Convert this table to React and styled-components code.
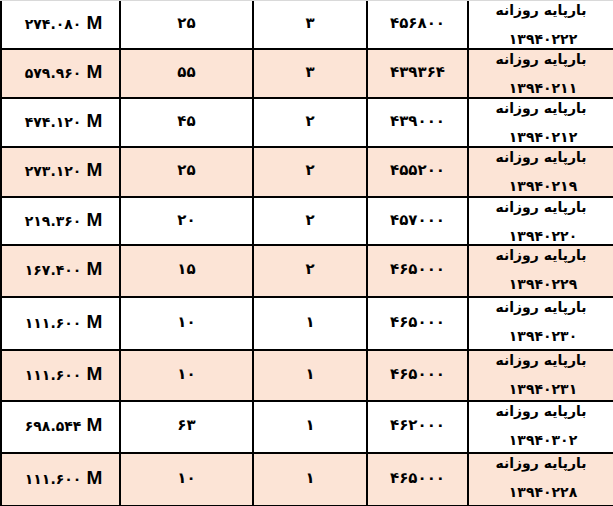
import React from 'react';
import styled, { createGlobalStyle } from 'styled-components';

const GlobalStyle = createGlobalStyle`
  html, body {
    margin: 0;
    padding: 0;
    background: #ffffff;
  }
  body {
    font-family: "DejaVu Sans", "Liberation Sans", sans-serif;
    color: #000;
  }
`;

const rows = [
  { total: '۲۷۴.۰۸۰', count: '۲۵', qty: '۳', price: '۴۵۶۸۰۰', code: '۱۳۹۴۰۲۲۲', h: 49 },
  { total: '۵۷۹.۹۶۰', count: '۵۵', qty: '۳', price: '۴۳۹۳۶۴', code: '۱۳۹۴۰۲۱۱', h: 49 },
  { total: '۴۷۴.۱۲۰', count: '۴۵', qty: '۲', price: '۴۳۹۰۰۰', code: '۱۳۹۴۰۲۱۲', h: 49 },
  { total: '۲۷۳.۱۲۰', count: '۲۵', qty: '۲', price: '۴۵۵۲۰۰', code: '۱۳۹۴۰۲۱۹', h: 50 },
  { total: '۲۱۹.۳۶۰', count: '۲۰', qty: '۲', price: '۴۵۷۰۰۰', code: '۱۳۹۴۰۲۲۰', h: 48 },
  { total: '۱۶۷.۴۰۰', count: '۱۵', qty: '۲', price: '۴۶۵۰۰۰', code: '۱۳۹۴۰۲۲۹', h: 52 },
  { total: '۱۱۱.۶۰۰', count: '۱۰', qty: '۱', price: '۴۶۵۰۰۰', code: '۱۳۹۴۰۲۳۰', h: 53 },
  { total: '۱۱۱.۶۰۰', count: '۱۰', qty: '۱', price: '۴۶۵۰۰۰', code: '۱۳۹۴۰۲۳۱', h: 51 },
  { total: '۶۹۸.۵۴۴', count: '۶۳', qty: '۱', price: '۴۶۲۰۰۰', code: '۱۳۹۴۰۳۰۲', h: 52 },
  { total: '۱۱۱.۶۰۰', count: '۱۰', qty: '۱', price: '۴۶۵۰۰۰', code: '۱۳۹۴۰۲۲۸', h: 53 },
];

const Sheet = styled.div`
  width: 613px;
  height: 506px;
  overflow: hidden;
  border-top: 1px solid #d9d9d9;
  box-sizing: border-box;
`;

const Row = styled.div`
  display: grid;
  grid-template-columns: 121px 133px 114px 101px 144px;
  height: ${(p) => p.$h}px;
  box-sizing: border-box;
  border-bottom: 2px solid #000;
  background: ${(p) => (p.$shaded ? '#fce4d6' : '#ffffff')};
`;

const Cell = styled.div`
  display: flex;
  align-items: center;
  justify-content: center;
  border-left: ${(p) => (p.$first ? '2px solid #000' : 'none')};
  border-right: 2px solid #000;
  font-weight: bold;
  font-size: 15px;
  padding-bottom: 4px;
  box-sizing: border-box;
`;

const Amount = styled.span`
  display: inline-flex;
  align-items: baseline;
  gap: 5px;
  font-size: 14px;
  margin-left: 6px;
`;

const Unit = styled.span`
  font-family: "Liberation Sans", Arial, sans-serif;
  font-size: 19px;
  font-weight: bold;
`;

const LabelCell = styled.div`
  direction: rtl;
  display: flex;
  flex-direction: column;
  align-items: center;
  gap: 11px;
  font-weight: bold;
  font-size: 14px;
  line-height: 18px;
  box-sizing: border-box;
`;

const LabelLine = styled.span`
  white-space: nowrap;
  margin-left: ${(p) => (p.$code ? '4px' : '0')};
`;

export default function App() {
  return (
    <>
      <GlobalStyle />
      <Sheet>
        {rows.map((r, i) => (
          <Row key={i} $h={r.h} $shaded={i % 2 === 1}>
            <Cell $first>
              <Amount>
                <span>{r.total}</span>
                <Unit>M</Unit>
              </Amount>
            </Cell>
            <Cell>{r.count}</Cell>
            <Cell>{r.qty}</Cell>
            <Cell>{r.price}</Cell>
            <LabelCell>
              <LabelLine>بارپایه روزانه</LabelLine>
              <LabelLine $code>{r.code}</LabelLine>
            </LabelCell>
          </Row>
        ))}
      </Sheet>
    </>
  );
}
